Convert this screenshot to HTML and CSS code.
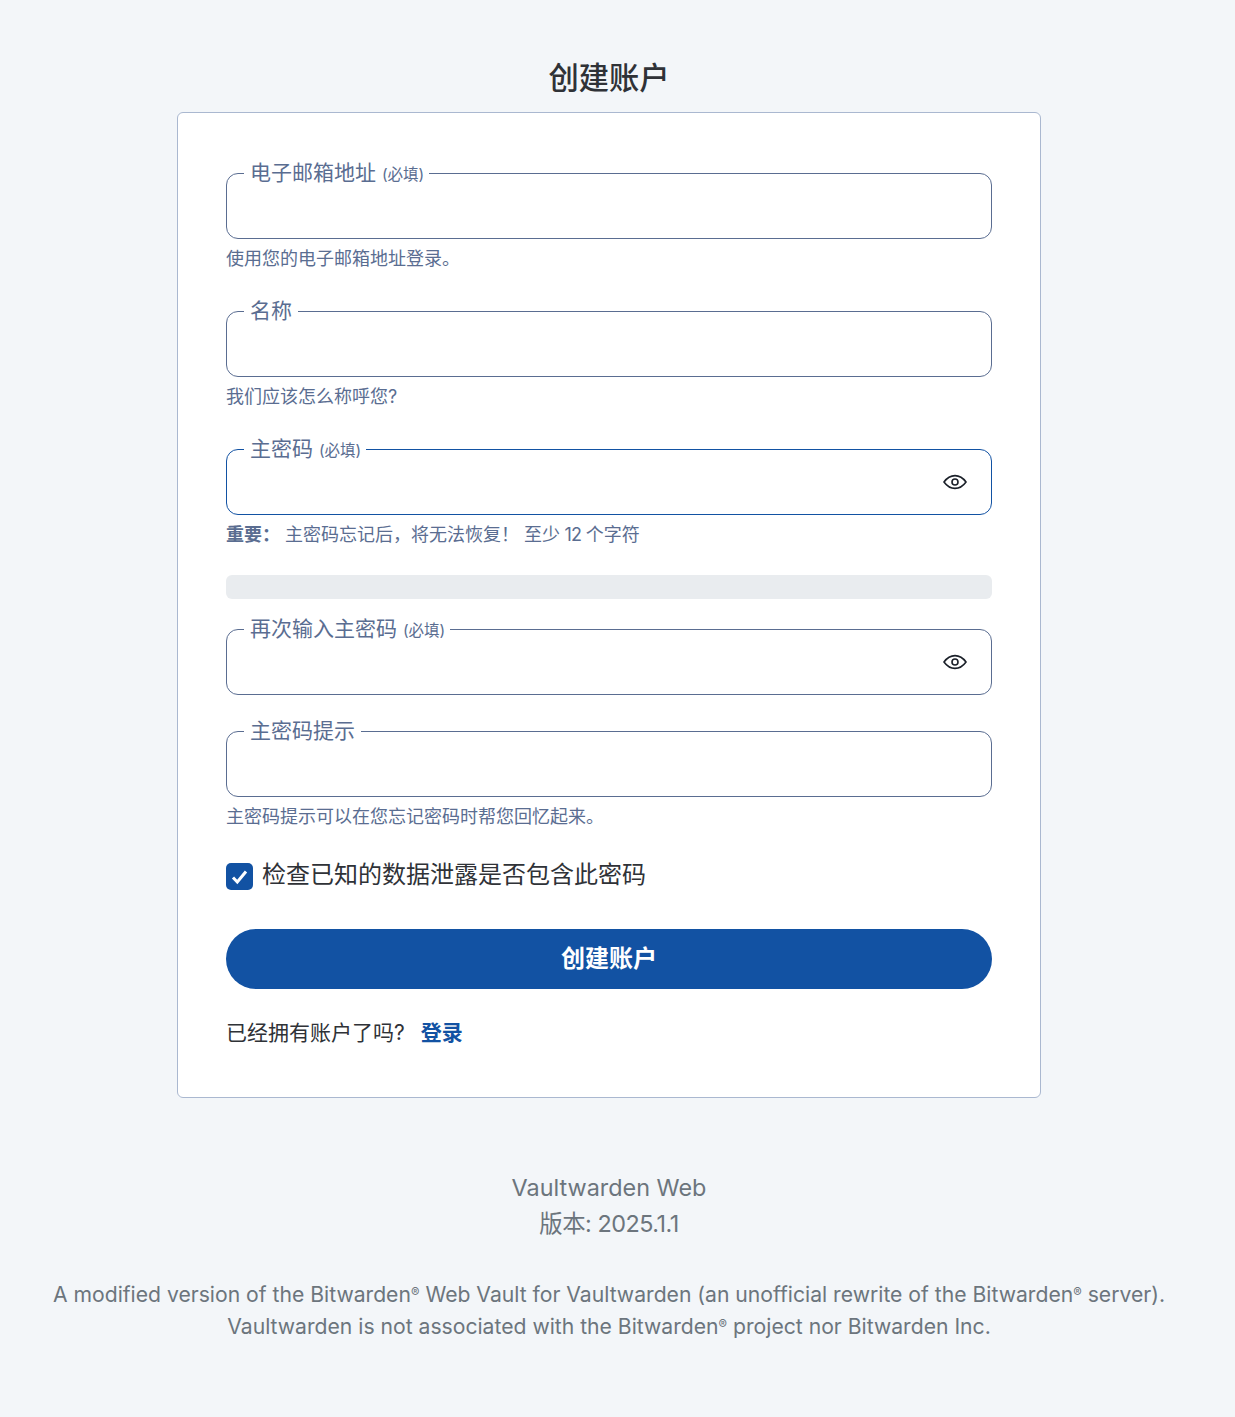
FILE: index.html
```html
<!DOCTYPE html>
<html lang="zh-CN">
<head>
<meta charset="utf-8">
<title>创建账户</title>
<link rel="stylesheet" href="styles.css">
</head>
<body>
<main class="page">
  <h1 class="title">创建账户</h1>
  <form class="card">
    <div class="field">
      <fieldset class="box"><legend class="legend">电子邮箱地址 <span class="req">(必填)</span></legend><input class="input" type="email"></fieldset>
      <p class="hint">使用您的电子邮箱地址登录。</p>
    </div>
    <div class="field">
      <fieldset class="box"><legend class="legend">名称</legend><input class="input" type="text"></fieldset>
      <p class="hint">我们应该怎么称呼您?</p>
    </div>
    <div class="field">
      <fieldset class="box box-active"><legend class="legend">主密码 <span class="req">(必填)</span></legend><input class="input" type="password">
        <svg class="eye" viewBox="0 0 24 16" aria-hidden="true"><path d="M1 8C4 3.800 7.700 1.600 12 1.600S20 3.800 23 8C20 12.200 16.300 14.400 12 14.400S4 12.200 1 8Z"/><circle cx="12" cy="8" r="3"/></svg>
      </fieldset>
      <p class="hint"><b class="strong">重要&#xFF1A;</b> 主密码忘记后&#xFF0C;将无法恢复&#xFF01; 至少<span class="num"> 12 </span>个字符</p>
    </div>
    <div class="meter"></div>
    <div class="field field-tight">
      <fieldset class="box"><legend class="legend">再次输入主密码 <span class="req">(必填)</span></legend><input class="input" type="password">
        <svg class="eye" viewBox="0 0 24 16" aria-hidden="true"><path d="M1 8C4 3.800 7.700 1.600 12 1.600S20 3.800 23 8C20 12.200 16.300 14.400 12 14.400S4 12.200 1 8Z"/><circle cx="12" cy="8" r="3"/></svg>
      </fieldset>
    </div>
    <div class="field">
      <fieldset class="box"><legend class="legend">主密码提示</legend><input class="input" type="text"></fieldset>
      <p class="hint">主密码提示可以在您忘记密码时帮您回忆起来。</p>
    </div>
    <label class="check">
      <span class="tick"><svg viewBox="0 0 27 27" aria-hidden="true"><path d="M7 14.500 11.300 19 20 8.500"/></svg></span>
      <span>检查已知的数据泄露是否包含此密码</span>
    </label>
    <button class="submit" type="button">创建账户</button>
    <p class="signin">已经拥有账户了吗?<a class="link" href="#">登录</a></p>
  </form>
  <footer class="foot">
    <p class="app">Vaultwarden Web<br><span class="ver">版本: 2025.1.1</span></p>
    <p class="legal">A modified version of the Bitwarden<span class="reg">®</span> Web Vault for Vaultwarden (an unofficial rewrite of the Bitwarden<span class="reg">®</span> server).<br>Vaultwarden is not associated with the Bitwarden<span class="reg">®</span> project nor Bitwarden Inc.</p>
  </footer>
</main>
</body>
</html>
```
FILE: styles.css
```css
* { box-sizing: border-box; }
html, body { margin: 0; }
body {
  background: #f3f6f9;
  font-family: "Inter", "Noto Sans CJK SC", sans-serif;
  color: #212529;
}
.page {
  display: flex;
  flex-direction: column;
  align-items: center;
  padding: 56px 17px 0 0;
  min-height: 1417px;
}
.title {
  margin: 0 0 12px;
  height: 44px;
  line-height: 44px;
  font-size: 30.300px;
  font-weight: 500;
  color: #2f3237;
}
.card {
  display: flex;
  flex-direction: column;
  width: 864px;
  height: 986px;
  padding: 48px 48px 0;
  background: #fff;
  border: 1px solid #aab8d0;
  border-radius: 6px;
}
.field { margin-bottom: 28px; }
.field-tight { margin-bottom: 24px; }
.box {
  position: relative;
  display: block;
  margin: 0;
  padding: 0;
  height: 78px;
  border: 1px solid #5a6d91;
  border-radius: 12px;
  min-width: 0;
}
.box-active { border-color: #1252a3; }
.legend {
  margin-left: 17px;
  padding: 0 6px;
  height: 24px;
  line-height: 24px;
  font-size: 21px;
  color: #5a6d91;
  white-space: nowrap;
}
.req { font-size: 15.500px; margin-right: -1px; }
.input {
  display: block;
  width: 100%;
  height: 52px;
  border: 0;
  background: transparent;
  outline: 0;
}
.eye {
  position: absolute;
  right: 24px;
  top: 13px;
  width: 24px;
  height: 16px;
  fill: none;
  stroke: #1b2029;
  stroke-width: 1.600;
}
.hint {
  margin: 8px 0 0;
  height: 24px;
  line-height: 24px;
  font-size: 18px;
  color: #5a6d91;
  white-space: nowrap;
}
.strong { font-weight: 700; }
.num { letter-spacing: -0.700px; }
.meter {
  height: 24px;
  margin-bottom: 18px;
  background: #e9ecef;
  border-radius: 6px;
}
.check {
  display: flex;
  align-items: center;
  gap: 9px;
  height: 26px;
  font-size: 24px;
  line-height: 26px;
  margin-top: 5px;
  color: #2f3237;
}
.tick {
  width: 27px;
  height: 27px;
  flex: none;
  background: #1252a3;
  border-radius: 5px;
  margin-top: 2px;
}
.tick svg {
  display: block;
  width: 27px;
  height: 27px;
  fill: none;
  stroke: #fff;
  stroke-width: 3;
}
.submit {
  display: block;
  width: 100%;
  height: 60px;
  margin-top: 41px;
  padding: 0 0 6px;
  border: 0;
  border-radius: 30px;
  background: #1252a3;
  color: #fff;
  font-family: inherit;
  font-size: 24px;
  font-weight: 700;
}
.signin {
  margin: 32px 0 0;
  height: 24px;
  line-height: 24px;
  font-size: 21px;
  color: #2f3237;
}
.link {
  margin-left: 16px;
  color: #1252a3;
  font-weight: 700;
  text-decoration: none;
}
.foot {
  margin-top: 72px;
  width: 100%;
  text-align: center;
  color: #6c757d;
}
.app {
  margin: 0;
  font-size: 23.400px;
  line-height: 36px;
}
.ver { letter-spacing: -0.500px; }
.legal {
  margin: 37px 0 0;
  font-size: 21.150px;
  line-height: 32px;
  white-space: nowrap;
}
.reg {
  font-size: 0.6em;
  vertical-align: 0.4em;
  line-height: 0;
}
```
